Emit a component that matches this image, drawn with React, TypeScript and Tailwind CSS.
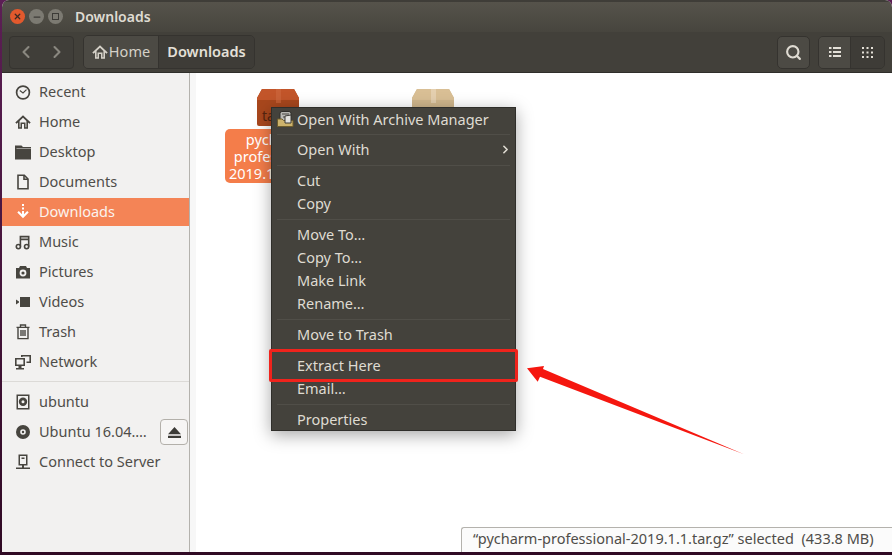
import { ReactNode } from "react";
import { ChevronLeft, ChevronRight, Minus, Search, X } from "lucide-react";

const FONT = "font-['Noto_Sans','Liberation_Sans',sans-serif]";

type IconProps = { className?: string };

function HomeIcon({ className }: IconProps) {
  return (
    <svg viewBox="0 0 16 16" className={className} fill="currentColor">
      <path d="M8 1.2 0.3 8.6 1.5 9.8 3 8.4V14.8H7V10H9V14.8H13V8.4L14.5 9.8 15.7 8.6ZM4.6 7 8 3.7 11.4 7V13.2H10.5V8.5H5.5V13.2H4.6Z" />
    </svg>
  );
}

const places: { label: string; icon: ReactNode; active?: boolean }[] = [
  {
    label: "Recent",
    icon: (
      <svg viewBox="0 0 16 16" className="h-4 w-4" fill="none" stroke="currentColor" strokeWidth="1.7">
        <circle cx="8" cy="8.5" r="6.4" />
        <path d="M4.8 6.6 8 9 11.5 5.6" strokeWidth="1.2" />
      </svg>
    ),
  },
  { label: "Home", icon: <HomeIcon className="h-4 w-4" /> },
  {
    label: "Desktop",
    icon: (
      <svg viewBox="0 0 16 16" className="h-4 w-4" fill="currentColor">
        <path d="M0 1.5H6.5L8 3H16V4.5H1.5V5H16V15.5H0Z" />
      </svg>
    ),
  },
  {
    label: "Documents",
    icon: (
      <svg viewBox="0 0 16 16" className="h-4 w-4" fill="none" stroke="currentColor" strokeWidth="1.6">
        <path d="M3 1.3H9.3L13 5V14.7H3Z" />
        <path d="M9 1.3V5.2H13" />
      </svg>
    ),
  },
  {
    label: "Downloads",
    active: true,
    icon: (
      <svg viewBox="0 0 16 16" className="h-4 w-4" fill="currentColor">
        <path d="M7 0H9V2H7ZM7 3.5H9V5.5H7ZM7 7H9V10.2L12.2 7 13.7 8.4 8 14.2 2.3 8.4 3.8 7 7 10.2Z" />
      </svg>
    ),
  },
  {
    label: "Music",
    icon: (
      <svg viewBox="0 0 16 16" className="h-4 w-4" fill="none" stroke="currentColor" strokeWidth="1.6">
        <circle cx="3.4" cy="12.6" r="2.1" />
        <circle cx="11.6" cy="12.6" r="2.1" />
        <path d="M5.4 12.5V2.6H13.7V12.5M5.4 5.4H13.7" />
      </svg>
    ),
  },
  {
    label: "Pictures",
    icon: (
      <svg viewBox="0 0 16 16" className="h-4 w-4" fill="currentColor">
        <path
          fillRule="evenodd"
          d="M5 2H11L12 4H15V14.5H1V4H4ZM8 5.6A3.4 3.4 0 1 0 8 12.4 3.4 3.4 0 0 0 8 5.6ZM8 7.4A1.6 1.6 0 1 1 8 10.6 1.6 1.6 0 0 1 8 7.4Z"
        />
      </svg>
    ),
  },
  {
    label: "Videos",
    icon: (
      <svg viewBox="0 0 16 16" className="h-4 w-4" fill="currentColor">
        <path d="M5 3H15V13H5ZM1 5.5 4 7.5V8.5L1 10.5Z" />
      </svg>
    ),
  },
  {
    label: "Trash",
    icon: (
      <svg viewBox="0 0 16 16" className="h-4 w-4" fill="none" stroke="currentColor" strokeWidth="1.4">
        <path d="M1.5 3.4H14.5M5.5 3V1H10.5V3M3 3.6V14.6H13V3.6M6 6V12M8 6V12M10 6V12" />
      </svg>
    ),
  },
  {
    label: "Network",
    icon: (
      <svg viewBox="0 0 16 16" className="h-4 w-4" fill="currentColor">
        <path
          fillRule="evenodd"
          d="M0 4H10V12H6.5V14H9V15.5H1V14H3.5V12H0ZM1.6 5.6V10.4H8.4V5.6ZM6 1H16V9H11.5V7.4H14.4V2.6H7.6V3H6Z"
        />
      </svg>
    ),
  },
];

const devices: { label: string; icon: ReactNode; eject?: boolean }[] = [
  {
    label: "ubuntu",
    icon: (
      <svg viewBox="0 0 16 16" className="h-4 w-4" fill="currentColor">
        <path
          fillRule="evenodd"
          d="M1.5 0.5H14.5V15.5H1.5ZM3 2V14H13V2ZM8 3.5A4.2 4.2 0 1 1 8 11.9 4.2 4.2 0 0 1 8 3.5ZM8 6.2A1.5 1.5 0 1 0 8 9.2 1.5 1.5 0 0 0 8 6.2Z"
        />
      </svg>
    ),
  },
  {
    label: "Ubuntu 16.04.…",
    eject: true,
    icon: (
      <svg viewBox="0 0 16 16" className="h-4 w-4" fill="currentColor">
        <path
          fillRule="evenodd"
          d="M8 1A7 7 0 1 1 8 15 7 7 0 0 1 8 1ZM8 5.2A2.8 2.8 0 1 0 8 10.8 2.8 2.8 0 0 0 8 5.2ZM8 6.8A1.2 1.2 0 1 1 8 9.2 1.2 1.2 0 0 1 8 6.8Z"
        />
      </svg>
    ),
  },
  {
    label: "Connect to Server",
    icon: (
      <svg viewBox="0 0 16 16" className="h-4 w-4" fill="currentColor">
        <path
          fillRule="evenodd"
          d="M3.5 0.5H12.5V11.5H9V13.5H15V15H1V13.5H7V11.5H3.5ZM5 2V10H11V2ZM6.5 3.5H9.5V5H6.5Z"
        />
      </svg>
    ),
  },
];

function SidebarRow({ label, icon, active, eject }: { label: string; icon: ReactNode; active?: boolean; eject?: boolean }) {
  return (
    <div
      className={`relative mb-[2px] flex h-[28px] items-center gap-[8px] pl-[13px] text-[14.5px] ${
        active ? "bg-[#f48456] text-[#fbf3ee]" : "text-[#4f4d49]"
      }`}
    >
      <span className={active ? "text-white" : "text-[#47453f]"}>{icon}</span>
      <span className="whitespace-nowrap">{label}</span>
      {eject && (
        <span className="absolute right-[1px] top-[1px] flex h-[26px] w-[28px] items-center justify-center rounded-[4px] border border-[#b3b0aa] bg-[#f6f5f4]">
          <svg viewBox="0 0 12 12" className="h-[13px] w-[13px]" fill="#3c3b37">
            <path d="M6 1 12 7.5H0ZM0 9H12V11H0Z" />
          </svg>
        </span>
      )}
    </div>
  );
}

function ArchiveIcon({ body, top, light, ink }: { body: string; top: string; light: string; ink?: string }) {
  return (
    <svg viewBox="0 0 42 37" className="h-[37px] w-[42px]">
      <path d="M5 0H37L42 9V35Q42 37 40 37H2Q0 37 0 35V9Z" fill={body} />
      <path d="M5 0H37L42 9V11H0V9Z" fill={top} />
      <rect x="19" y="0" width="5" height="14" fill={light} opacity="0.55" />
      {ink && (
        <text x="5" y="32" fontSize="14" fill={ink}>
          tar
        </text>
      )}
    </svg>
  );
}

function MenuItem({ children, arrow, icon, short }: { children: ReactNode; arrow?: boolean; icon?: boolean; short?: boolean }) {
  return (
    <div className={`relative flex items-center pl-[25px] whitespace-nowrap ${short ? "h-[22px]" : "h-[23px]"}`}>
      {icon && (
        <svg viewBox="0 0 17 16" className="absolute left-[5px] top-[3px] h-[16px] w-[17px]">
          <rect x="3" y="0.5" width="11" height="10" rx="2" fill="#b9b9b4" stroke="#2f2e2a" />
          <path d="M5 3H12M6 6H13" stroke="#4a4944" />
          <path d="M0.5 8H5L6.5 9.5H16V15.5H0.5Z" fill="#cdb36c" stroke="#6e5d2c" />
          <path d="M8 5 14 4V12H8Z" fill="#e3e3df" stroke="#3c3b37" />
        </svg>
      )}
      {children}
      {arrow && <ChevronRight className="absolute right-[3px] top-[5px] h-[13px] w-[13px]" strokeWidth={3} />}
    </div>
  );
}

function MenuSep() {
  return (
    <div className="flex h-[8px] items-center px-[5px]">
      <div className="h-px w-full bg-[#504e48]" />
    </div>
  );
}

export default function App() {
  return (
    <div className={`relative h-[555px] w-[892px] overflow-hidden bg-gradient-to-b from-[#5c1f55] to-[#300a24] pb-[3px] pl-[2px] ${FONT}`}>
      <div className="flex h-full flex-col overflow-hidden rounded-t-[7px] bg-white">
        {/* title bar */}
        <div className="flex h-[32px] items-center border-t-[2px] border-[#3f3d38] bg-gradient-to-b from-[#56534b] to-[#47453e] pb-[1px] pl-[8px]">
          <span className="flex h-[15px] w-[15px] items-center justify-center rounded-full bg-[#e2592d] text-[#3c2a22]">
            <X className="h-[9px] w-[9px]" strokeWidth={3.5} />
          </span>
          <span className="ml-[4px] flex h-[15px] w-[15px] items-center justify-center rounded-full bg-[#7c7a72] text-[#3c3b37]">
            <Minus className="h-[10px] w-[10px]" strokeWidth={3} />
          </span>
          <span className="ml-[4px] flex h-[15px] w-[15px] items-center justify-center rounded-full bg-[#7c7a72]">
            <span className="h-[7px] w-[7px] border border-[#3c3b37]" />
          </span>
          <span className="ml-[12px] text-[14px] font-semibold text-[#dfdbd2]">Downloads</span>
        </div>

        {/* toolbar */}
        <div className="flex h-[41px] items-center border-b border-[#2f2e2a] bg-[#42403a] pl-[7px] pr-[7px]">
          <div className="flex h-[33px] w-[65px] items-center justify-around rounded-[4px] border border-[#35332f] bg-[#403e39] text-[#8a8880]">
            <ChevronLeft className="h-[20px] w-[20px]" strokeWidth={2.5} />
            <ChevronRight className="h-[20px] w-[20px]" strokeWidth={2.5} />
          </div>
          <div className="ml-[9px] flex h-[34px] items-stretch overflow-hidden rounded-[5px] border border-[#35332f] text-[14.5px]">
            <div className="flex w-[75px] items-center justify-center gap-[1px] border-r border-[#35332f] bg-[#4c4a44] text-[#d5d1c8]">
              <HomeIcon className="h-[16px] w-[16px]" />
              Home
            </div>
            <div className="flex w-[95px] items-center justify-center bg-[#3e3c37] font-semibold text-[#e4e0d8]">
              Downloads
            </div>
          </div>
          <div className="ml-auto flex h-[33px] w-[33px] items-center justify-center rounded-[5px] border border-[#35332f] bg-[#4c4a44] text-[#dfdbd2]">
            <Search className="h-[17px] w-[17px]" strokeWidth={3} />
          </div>
          <div className="ml-[8px] flex h-[33px] items-stretch overflow-hidden rounded-[5px] border border-[#35332f]">
            <div className="flex w-[32px] items-center justify-center border-r border-[#35332f] bg-[#4c4a44]">
              <svg viewBox="0 0 12 12" className="h-[12px] w-[12px]" fill="#e4e0d8">
                <path d="M0 1H2.5V3H0ZM4 1H12V3H4ZM0 5H2.5V7H0ZM4 5H12V7H4ZM0 9H2.5V11H0ZM4 9H12V11H4Z" />
              </svg>
            </div>
            <div className="flex w-[33px] items-center justify-center bg-[#3e3c37]">
              <svg viewBox="0 0 11 11" className="h-[11px] w-[11px]" fill="#e4e0d8">
                <path d="M0 0H2V2H0ZM4.5 0H6.5V2H4.5ZM9 0H11V2H9ZM0 4.5H2V6.5H0ZM4.5 4.5H6.5V6.5H4.5ZM9 4.5H11V6.5H9ZM0 9H2V11H0ZM4.5 9H6.5V11H4.5ZM9 9H11V11H9Z" />
              </svg>
            </div>
          </div>
        </div>

        {/* body */}
        <div className="flex min-h-0 flex-1">
          <aside className="w-[188px] shrink-0 border-r border-[#b4b2ad] bg-[#f2f1f0] pt-[5px]">
            {places.map((p) => (
              <SidebarRow key={p.label} label={p.label} icon={p.icon} active={p.active} />
            ))}
            <div className="mb-[6px] mt-[5px] h-px bg-[#dcdad7]" />
            {devices.map((d) => (
              <SidebarRow key={d.label} label={d.label} icon={d.icon} eject={d.eject} />
            ))}
          </aside>
          <div className="w-[6px] shrink-0 bg-[#f7f7f7]" />
          <main className="flex flex-1 gap-[78px] pl-[29px] pt-[16px] text-[14.5px]">
            <div className="flex w-[106px] flex-col items-center">
              <ArchiveIcon body="#a8471d" top="#c2552a" light="#d06c42" ink="#56240f" />
              <div className="mt-[3px] w-full rounded-[5px] bg-[#f47d4a] pb-[1px] pt-[2px] text-center leading-[17px] text-white">
                pycharm-
                <br />
                professional-
                <br />
                2019.1.1.tar.gz
              </div>
            </div>
            <div className="flex w-[48px] flex-col items-center">
              <ArchiveIcon body="#cfb68c" top="#d9bf95" light="#ecdcc4" />
            </div>
          </main>
        </div>
      </div>

      {/* context menu */}
      <div className="absolute left-[271px] top-[107px] w-[245px] border border-[#2f2e2a] bg-[#44423c] text-[14.5px] leading-none text-[#dfdbd2] shadow-[0_4px_16px_rgba(0,0,0,0.35)]">
        <MenuItem icon short>Open With Archive Manager</MenuItem>
        <MenuSep />
        <MenuItem arrow>Open With</MenuItem>
        <MenuSep />
        <MenuItem>Cut</MenuItem>
        <MenuItem>Copy</MenuItem>
        <MenuSep />
        <MenuItem>Move To…</MenuItem>
        <MenuItem>Copy To…</MenuItem>
        <MenuItem>Make Link</MenuItem>
        <MenuItem>Rename…</MenuItem>
        <MenuSep />
        <MenuItem>Move to Trash</MenuItem>
        <MenuSep />
        <MenuItem>Extract Here</MenuItem>
        <MenuItem>Email…</MenuItem>
        <MenuSep />
        <MenuItem short>Properties</MenuItem>
      </div>

      {/* status floating bar */}
      <div className="absolute bottom-[3px] right-0 flex h-[25px] w-[431px] items-center rounded-tl-[3px] border-l border-t border-[#b4b2ad] bg-[#fbfbfb] pb-[2px] pl-[11px] text-[14.5px] text-[#4f4d49]">
        “pycharm-professional-2019.1.1.tar.gz” selected&nbsp;&nbsp;(433.8 MB)
      </div>

      {/* annotation */}
      <div className="absolute left-[269px] top-[349px] h-[33px] w-[249px] rounded-[2px] border-[3px] border-[#f0231c]" />
      <svg className="absolute left-[520px] top-[360px] h-[100px] w-[230px]" viewBox="0 0 230 100">
        <path d="M7 8.3 24 6 23 9 224 94.3 20 16.7 17.7 21.7Z" fill="#f5170f" />
      </svg>
    </div>
  );
}
